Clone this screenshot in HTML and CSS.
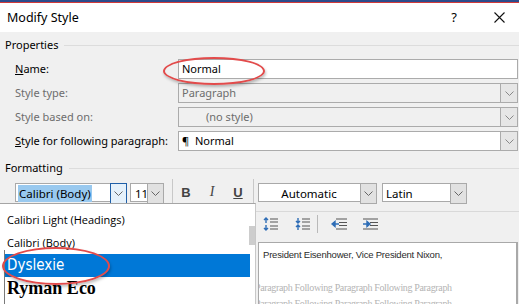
FILE: index.html
```html
<!DOCTYPE html>
<html>
<head>
	<meta charset='utf-8'>
	<title>Modify Style</title>
	<link rel="stylesheet" href="styles.css">
</head>
<body>
	<div class="strip"></div>
	<div class="titlebar">
		<span class="title">Modify Style</span>
		<span class="help">?</span>
		<svg class="close" width="11" height="11" viewBox="0 0 11 11"><path d="M0.5 0.5L10.5 10.5M10.5 0.5L0.5 10.5" stroke="#111" stroke-width="1.1"/></svg>
	</div>

	<div class="dialog">
		<div class="group"><span>Properties</span></div>
		<div class="props">
			<label><u>N</u>ame:</label>
			<div class="box white">Normal</div>

			<label class="dim">Style type:</label>
			<div class="box combo dim">Paragraph<span class="arrow"><svg width="9" height="5" viewBox="0 0 9 5"><path d="M0.5 0.5L4.5 4.5L8.5 0.5" fill="none" stroke="#888"/></svg></span></div>

			<label class="dim">Style based on:</label>
			<div class="box combo dim"><span class="nostyle">(no style)</span><span class="arrow"><svg width="9" height="5" viewBox="0 0 9 5"><path d="M0.5 0.5L4.5 4.5L8.5 0.5" fill="none" stroke="#888"/></svg></span></div>

			<label><u>S</u>tyle for following paragraph:</label>
			<div class="box combo white">&para;&nbsp;&nbsp;Normal<span class="arrow"><svg width="9" height="5" viewBox="0 0 9 5"><path d="M0.5 0.5L4.5 4.5L8.5 0.5" fill="none" stroke="#888"/></svg></span></div>
		</div>

		<div class="group fmt"><span>Formatting</span></div>
		<div class="toolbar">
			<div class="tcombo font"><span class="sel">Calibri (Body)</span><span class="arrow focus"><svg width="9" height="5" viewBox="0 0 9 5"><path d="M0.5 0.5L4.5 4.5L8.5 0.5" fill="none" stroke="#666"/></svg></span></div>
			<div class="tcombo size">11<span class="arrow"><svg width="9" height="5" viewBox="0 0 9 5"><path d="M0.5 0.5L4.5 4.5L8.5 0.5" fill="none" stroke="#666"/></svg></span></div>
			<div class="vsep first"></div>
			<span class="tbtn bold">B</span>
			<span class="tbtn ital">I</span>
			<span class="tbtn under">U</span>
			<div class="vsep second"></div>
			<div class="tcombo color"><span class="center">Automatic</span><span class="arrow"><svg width="9" height="5" viewBox="0 0 9 5"><path d="M0.5 0.5L4.5 4.5L8.5 0.5" fill="none" stroke="#666"/></svg></span></div>
			<div class="tcombo script">Latin<span class="arrow"><svg width="9" height="5" viewBox="0 0 9 5"><path d="M0.5 0.5L4.5 4.5L8.5 0.5" fill="none" stroke="#666"/></svg></span></div>
		</div>
		<div class="hsep"></div>
		<div class="paratools">
			<svg class="sp1" width="16" height="14" viewBox="0 0 16 14"><path d="M3 1L3 6M1 3L3 1L5 3M3 8L3 13M1 11L3 13L5 11" fill="none" stroke="#2e6db6" stroke-width="1.4"/><path d="M7 2H15M7 5H15M7 9H15M7 12H15" stroke="#555"/></svg>
			<svg class="sp2" width="16" height="14" viewBox="0 0 16 14"><path d="M3 1L3 6M1 4L3 6L5 4M3 8L3 13M1 10L3 8L5 10" fill="none" stroke="#2e6db6" stroke-width="1.4"/><path d="M7 2H15M7 5H15M7 9H15M7 12H15" stroke="#555"/></svg>
			<div class="psep"></div>
			<svg class="ind1" width="17" height="12" viewBox="0 0 17 12"><path d="M5 1H16M8 4.5H16M8 7.5H16M5 11H16" stroke="#555"/><path d="M1 6L4 3.5V8.5Z M3 6H8" fill="#2e6db6" stroke="#2e6db6" stroke-width="1.4"/></svg>
			<svg class="ind2" width="17" height="12" viewBox="0 0 17 12"><path d="M1 1H16M8 4.5H16M8 7.5H16M1 11H16" stroke="#555"/><path d="M8 6L5 3.5V8.5Z M1 6H6" fill="#2e6db6" stroke="#2e6db6" stroke-width="1.4"/></svg>
		</div>
		<div class="preview">
			<p class="sample">President Eisenhower, Vice President Nixon,</p>
			<p class="follow">Paragraph Following Paragraph Following Paragraph</p>
			<p class="follow">Paragraph Following Paragraph Following Paragraph</p>
		</div>
	</div>

	<div class="fontlist">
		<div class="item">Calibri Light (Headings)</div>
		<div class="item">Calibri (Body)</div>
		<div class="item hl">Dyslexie</div>
		<div class="item ryman">Ryman Eco</div>
		<div class="thumb"></div>
		<div class="edge"></div>
	</div>

	<div class="ring ring-name"></div>
	<div class="ring ring-dys"></div>
</body>
</html>
```
FILE: styles.css
```css
html, body {margin:0; padding:0;}
body {
	width:519px;
	height:304px;
	overflow:hidden;
	position:relative;
	background:#f0f0f0;
	font-family:"Noto Sans", "Open Sans", sans-serif;
	font-size:11px;
	color:#000;
}
.strip {height:2px; background:#2b4c8c; border-bottom:1px solid #d23a3a;}
.titlebar {
	height:29px;
	background:#fff;
	display:flex;
	align-items:center;
	padding-left:7px;
}
.title {font-size:12.5px; flex:1; margin-top:-1px;}
.help {font-size:13px; margin-right:37px; margin-top:-2px;}
.close {margin-right:14px;}

.dialog {padding:6px 0 0 5px;}
.group {
	display:flex;
	align-items:center;
	height:14px;
	line-height:14px;
}
.group::after {
	content:"";
	flex:1;
	height:1px;
	background:#dcdcdc;
	margin-left:6px;
}
.props {
	display:grid;
	grid-template-columns:163px 340px;
	row-gap:4px;
	margin-top:7px;
	margin-left:10px;
}
.props label {height:20px; line-height:20px; white-space:nowrap;}
.dim {color:#6d6d6d;}
.box {
	height:18px;
	line-height:18px;
	border:1px solid #ababab;
	padding-left:3px;
	position:relative;
}
.white {background:#fff;}
.combo .arrow {
	position:absolute;
	right:0;
	top:0;
	width:16px;
	height:18px;
	background:#e6e6e6;
	border-left:1px solid #ababab;
	display:flex;
	align-items:center;
	justify-content:center;
}
.nostyle {margin-left:24px;}

.fmt {margin-top:10px;}
.toolbar {
	display:flex;
	align-items:center;
	height:22px;
	margin-top:6px;
	margin-left:10px;
}
.tcombo {
	height:19px;
	line-height:19px;
	border:1px solid #a9a9a9;
	background:#fff;
	position:relative;
	padding-left:3px;
	box-sizing:border-box;
	font-size:11.5px;
}
.tcombo .arrow {
	position:absolute;
	right:-1px;
	top:-1px;
	width:15px;
	height:19px;
	background:#e1e1e1;
	border:1px solid #a9a9a9;
	display:flex;
	align-items:center;
	justify-content:center;
}
.tcombo .arrow.focus {border-color:#1f5fa8; background:#e5f1fb;}
.font {width:112px; padding-left:2px;}
.sel {background:#99c9ef; padding:1px 1px;}
.size {width:34px; margin-left:3px; padding-left:4px;}
.color {width:119px; margin-left:4px;}
.center {display:block; padding-right:20px; text-align:center;}
.script {width:85px; margin-left:5px;}
.vsep {width:1px; height:26px; background:#c8c8c8;}
.vsep.first {margin:0 0 0 8px;}
.vsep.second {margin:0 0 0 2px;}
.tbtn {width:26px; text-align:center; font-size:13px; color:#444; font-weight:bold; font-family:"Liberation Sans", sans-serif;}
.ital {font-style:italic; font-weight:normal; font-family:"Liberation Serif", serif; font-size:14px;}
.under {text-decoration:underline;}

.hsep {height:1px; background:#d9d9d9; margin-top:8px;}
.paratools {
	display:flex;
	align-items:center;
	height:16px;
	margin-top:4px;
	margin-left:258px;
}
.sp1 {margin-right:16px;}
.psep {width:1px; height:18px; background:#b9b9b9; margin:0 13px 0 6px;}
.ind1 {margin-right:14px;}
.preview {
	margin:10px 1px 0 253px;
	height:70px;
	background:#fff;
	border:1px solid #a9a9a9;
	border-right:2px solid #a9a9a9;
	overflow:hidden;
	white-space:nowrap;
}
.preview p {margin:0;}
.sample {
	font-family:"Liberation Sans", sans-serif;
	font-size:9.5px;
	color:#2a2a2a;
	margin:6px 0 0 4px !important;
	letter-spacing:-0.2px;
}
.follow {
	font-family:"Liberation Serif", serif;
	font-size:10px;
	color:#b4b4b4;
	margin-left:-4px !important;
	line-height:16px;
	letter-spacing:-0.35px;
}
.sample + .follow {margin-top:20px !important;}

.fontlist {
	position:absolute;
	left:0;
	top:203px;
	width:256px;
	height:102px;
	background:#fff;
	border-top:1px solid #a5a5a5;
	border-right:1px solid #c8c8c8;
	padding-top:4px;
	box-sizing:border-box;
	font-family:"Open Sans", "Noto Sans", sans-serif;
}
.item {height:23px; line-height:23px; padding-left:7px; font-size:11px;}
.item.hl {
	background:#0078d7;
	color:#fff;
	margin-left:5px;
	padding-left:2px;
	margin-right:5px;
	font-family:"DejaVu Sans Condensed", "DejaVu Sans", sans-serif;
	font-size:15px;
}
.item.ryman {font-family:"Liberation Serif", serif; font-weight:bold; font-size:18px;}
.thumb {position:absolute; right:0; top:22px; width:6px; height:19px; background:#cdcdcd;}
.edge {position:absolute; left:4px; top:46px; bottom:0; width:1px; background:#7a7a7a;}

.ring {
	position:absolute;
	border:2px solid #e24b4b;
	border-radius:50%;
	box-shadow:1px 2px 3px rgba(0,0,0,0.25);
}
.ring-name {left:163px; top:57px; width:98px; height:24px;}
.ring-dys {left:2px; top:247px; width:104px; height:34px;}
```
